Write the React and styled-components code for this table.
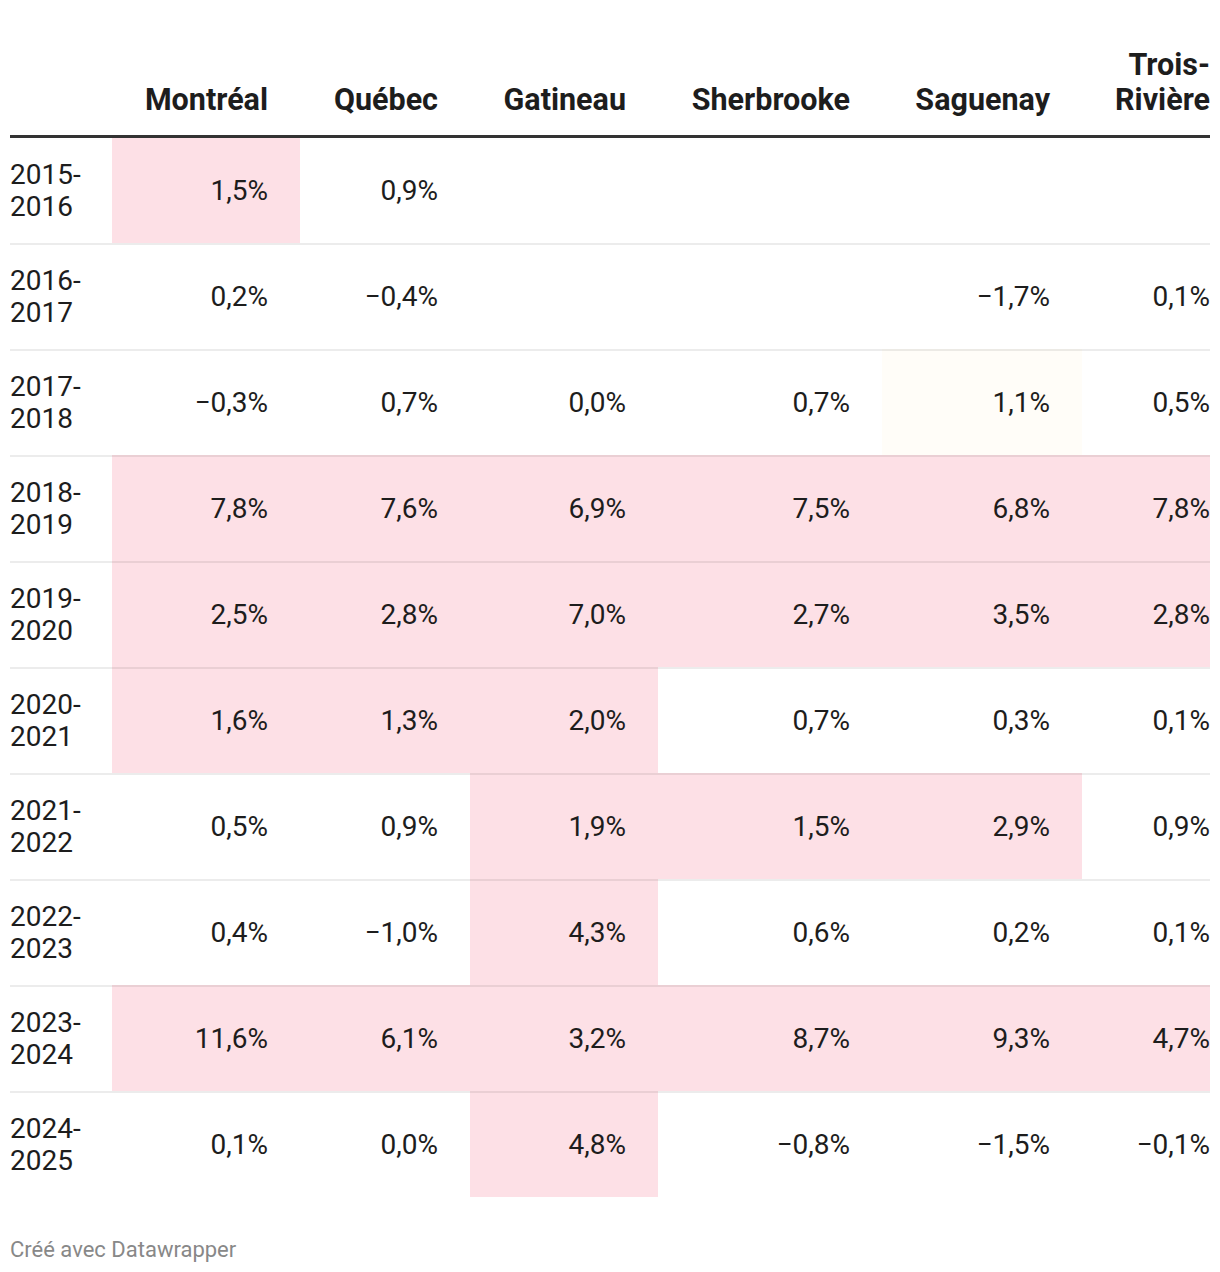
import React from "react";
import styled, { createGlobalStyle } from "styled-components";

const Global = createGlobalStyle`
  html, body { margin: 0; padding: 0; background: #ffffff; }
  body { font-family: Roboto, "Liberation Sans", Arial, sans-serif; color: #1d1d1d; }
`;

const Page = styled.div`
  padding: 47px 10px 0 10px;
  width: 1200px;
`;

const Table = styled.div`
  display: grid;
  grid-template-columns: 102px 188px 170px 188px 224px 200px 128px;
`;

const HeadCell = styled.div`
  font-weight: 700;
  font-size: 30.5px;
  line-height: 35px;
  padding: 0 ${(p) => (p.$last || p.$first ? "0" : "32px")} 18px 0;
  border-bottom: 3px solid #333333;
  box-sizing: border-box;
  display: flex;
  align-items: flex-end;
  text-align: ${(p) => (p.$first ? "left" : "right")};
  justify-content: ${(p) => (p.$first ? "flex-start" : "flex-end")};
`;

const Cell = styled.div`
  display: flex;
  align-items: center;
  justify-content: ${(p) => (p.$first ? "flex-start" : "flex-end")};
  box-sizing: border-box;
  height: ${(p) => (p.$top ? "105px" : "106px")};
  border-top: ${(p) => (p.$top ? "none" : "2px solid rgba(0,0,0,0.075)")};
  background: ${(p) => p.$bg || "transparent"};
  font-size: 28px;
  line-height: 32px;
  padding-right: ${(p) => (p.$last || p.$first ? "0" : "32px")};
  text-align: ${(p) => (p.$first ? "left" : "right")};
`;

const Footer = styled.div`
  margin-top: 40px;
  font-size: 22px;
  line-height: 26px;
  color: #888888;
`;

const PINK = "#fde0e6";
const CREAM = "#fffdf8";

const cols = ["Montréal", "Québec", "Gatineau", "Sherbrooke", "Saguenay", "Trois-Rivière"];

const rows = [
  ["2015-2016", [["1,5%", PINK], ["0,9%"], [""], [""], [""], [""]]],
  ["2016-2017", [["0,2%"], ["−0,4%"], [""], [""], ["−1,7%"], ["0,1%"]]],
  ["2017-2018", [["−0,3%"], ["0,7%"], ["0,0%"], ["0,7%"], ["1,1%", CREAM], ["0,5%"]]],
  ["2018-2019", [["7,8%", PINK], ["7,6%", PINK], ["6,9%", PINK], ["7,5%", PINK], ["6,8%", PINK], ["7,8%", PINK]]],
  ["2019-2020", [["2,5%", PINK], ["2,8%", PINK], ["7,0%", PINK], ["2,7%", PINK], ["3,5%", PINK], ["2,8%", PINK]]],
  ["2020-2021", [["1,6%", PINK], ["1,3%", PINK], ["2,0%", PINK], ["0,7%"], ["0,3%"], ["0,1%"]]],
  ["2021-2022", [["0,5%"], ["0,9%"], ["1,9%", PINK], ["1,5%", PINK], ["2,9%", PINK], ["0,9%"]]],
  ["2022-2023", [["0,4%"], ["−1,0%"], ["4,3%", PINK], ["0,6%"], ["0,2%"], ["0,1%"]]],
  ["2023-2024", [["11,6%", PINK], ["6,1%", PINK], ["3,2%", PINK], ["8,7%", PINK], ["9,3%", PINK], ["4,7%", PINK]]],
  ["2024-2025", [["0,1%"], ["0,0%"], ["4,8%", PINK], ["−0,8%"], ["−1,5%"], ["−0,1%"]]],
];

export default function App() {
  return (
    <Page>
      <Global />
      <Table>
        <HeadCell $first />
        {cols.map((c, i) => (
          <HeadCell key={c} $last={i === cols.length - 1}>
            <span>{c}</span>
          </HeadCell>
        ))}
        {rows.map(([year, vals], r) => (
          <React.Fragment key={year}>
            <Cell $first $top={r === 0}>
              <span>{year}</span>
            </Cell>
            {vals.map(([v, bg], i) => (
              <Cell key={i} $top={r === 0} $bg={bg} $last={i === vals.length - 1}>
                {v}
              </Cell>
            ))}
          </React.Fragment>
        ))}
      </Table>
      <Footer>Créé avec Datawrapper</Footer>
    </Page>
  );
}
